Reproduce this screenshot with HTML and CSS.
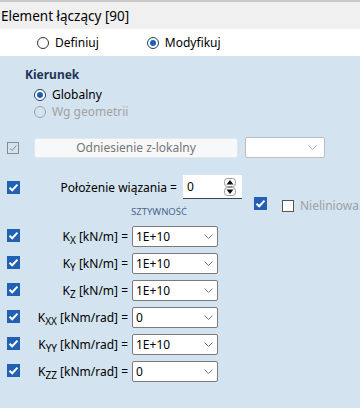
FILE: index.html
```html
<!DOCTYPE html>
<html lang="pl">
<head>
    <meta charset="UTF-8">
    <title>Element łączący</title>
    <link rel="stylesheet" href="styles.css">
</head>
<body>
    <div class="window">
        <div class="titlebar">
            <span class="title">Element łączący [90]</span>
        </div>

        <div class="modebar">
            <label class="radio"><span class="radio-dot"></span>Definiuj</label>
            <label class="radio"><span class="radio-dot checked"></span>Modyfikuj</label>
        </div>

        <div class="panel">
            <div class="group">
                <div class="group-title">Kierunek</div>
                <div class="radio-list">
                    <label class="radio"><span class="radio-dot checked"></span>Globalny</label>
                    <label class="radio disabled"><span class="radio-dot"></span>Wg geometrii</label>
                </div>
            </div>

            <div class="ref-row">
                <span class="check disabled">
                    <svg width="12" height="12" viewBox="0 0 12 12"><path d="M2.5 6.5 L5 9 L10 3" fill="none" stroke="#8a8a8a" stroke-width="1.2"/></svg>
                </span>
                <button class="ref-button">Odniesienie z-lokalny</button>
                <div class="combo empty">
                    <svg class="chevron" width="9" height="5" viewBox="0 0 9 5"><path d="M0.5 0.5 L4.5 4.5 L8.5 0.5" fill="none" stroke="#b0b0b0" stroke-width="1"/></svg>
                </div>
            </div>

            <div class="pos-row">
                <span class="check on">
                    <svg width="13" height="13" viewBox="0 0 13 13"><path d="M2.5 6.8 L5.2 9.3 L10.5 3.6" fill="none" stroke="#fff" stroke-width="2"/></svg>
                </span>
                <span class="pos-label">Położenie wiązania =</span>
                <div class="spin">
                    <span class="value">0</span>
                    <svg width="12" height="18" viewBox="0 0 12 18">
                        <rect x="0.5" y="0.5" width="11" height="8" rx="3" fill="#fff" stroke="#999"/>
                        <rect x="0.5" y="9.5" width="11" height="8" rx="3" fill="#fff" stroke="#999"/>
                        <path d="M6 2 L9.5 6.5 L2.5 6.5 Z" fill="#111"/>
                        <path d="M2.5 11.5 L9.5 11.5 L6 16 Z" fill="#111"/>
                    </svg>
                </div>
            </div>

            <div class="stiff-head">
                <span class="stiff-title">SZTYWNOŚĆ</span>
                <span class="check on">
                    <svg width="13" height="13" viewBox="0 0 13 13"><path d="M2.5 6.8 L5.2 9.3 L10.5 3.6" fill="none" stroke="#fff" stroke-width="2"/></svg>
                </span>
                <label class="nonlin"><span class="check off"></span>Nieliniowa c</label>
            </div>

            <div class="stiff-list">
                <div class="stiff-row">
                    <span class="check on"><svg width="13" height="13" viewBox="0 0 13 13"><path d="M2.5 6.8 L5.2 9.3 L10.5 3.6" fill="none" stroke="#fff" stroke-width="2"/></svg></span>
                    <span class="stiff-label">K<sub>X</sub> [kN/m] =</span>
                    <div class="combo"><span class="value">1E+10</span><svg class="chevron" width="9" height="5" viewBox="0 0 9 5"><path d="M0.5 0.5 L4.5 4.5 L8.5 0.5" fill="none" stroke="#777" stroke-width="1"/></svg></div>
                </div>
                <div class="stiff-row">
                    <span class="check on"><svg width="13" height="13" viewBox="0 0 13 13"><path d="M2.5 6.8 L5.2 9.3 L10.5 3.6" fill="none" stroke="#fff" stroke-width="2"/></svg></span>
                    <span class="stiff-label">K<sub>Y</sub> [kN/m] =</span>
                    <div class="combo"><span class="value">1E+10</span><svg class="chevron" width="9" height="5" viewBox="0 0 9 5"><path d="M0.5 0.5 L4.5 4.5 L8.5 0.5" fill="none" stroke="#777" stroke-width="1"/></svg></div>
                </div>
                <div class="stiff-row">
                    <span class="check on"><svg width="13" height="13" viewBox="0 0 13 13"><path d="M2.5 6.8 L5.2 9.3 L10.5 3.6" fill="none" stroke="#fff" stroke-width="2"/></svg></span>
                    <span class="stiff-label">K<sub>Z</sub> [kN/m] =</span>
                    <div class="combo"><span class="value">1E+10</span><svg class="chevron" width="9" height="5" viewBox="0 0 9 5"><path d="M0.5 0.5 L4.5 4.5 L8.5 0.5" fill="none" stroke="#777" stroke-width="1"/></svg></div>
                </div>
                <div class="stiff-row">
                    <span class="check on"><svg width="13" height="13" viewBox="0 0 13 13"><path d="M2.5 6.8 L5.2 9.3 L10.5 3.6" fill="none" stroke="#fff" stroke-width="2"/></svg></span>
                    <span class="stiff-label">K<sub>XX</sub> [kNm/rad] =</span>
                    <div class="combo"><span class="value">0</span><svg class="chevron" width="9" height="5" viewBox="0 0 9 5"><path d="M0.5 0.5 L4.5 4.5 L8.5 0.5" fill="none" stroke="#777" stroke-width="1"/></svg></div>
                </div>
                <div class="stiff-row">
                    <span class="check on"><svg width="13" height="13" viewBox="0 0 13 13"><path d="M2.5 6.8 L5.2 9.3 L10.5 3.6" fill="none" stroke="#fff" stroke-width="2"/></svg></span>
                    <span class="stiff-label">K<sub>YY</sub> [kNm/rad] =</span>
                    <div class="combo"><span class="value">1E+10</span><svg class="chevron" width="9" height="5" viewBox="0 0 9 5"><path d="M0.5 0.5 L4.5 4.5 L8.5 0.5" fill="none" stroke="#777" stroke-width="1"/></svg></div>
                </div>
                <div class="stiff-row">
                    <span class="check on"><svg width="13" height="13" viewBox="0 0 13 13"><path d="M2.5 6.8 L5.2 9.3 L10.5 3.6" fill="none" stroke="#fff" stroke-width="2"/></svg></span>
                    <span class="stiff-label">K<sub>ZZ</sub> [kNm/rad] =</span>
                    <div class="combo"><span class="value">0</span><svg class="chevron" width="9" height="5" viewBox="0 0 9 5"><path d="M0.5 0.5 L4.5 4.5 L8.5 0.5" fill="none" stroke="#777" stroke-width="1"/></svg></div>
                </div>
            </div>
        </div>
    </div>
</body>
</html>
```

FILE: styles.css
```css
* {
    margin: 0;
    padding: 0;
    box-sizing: border-box;
    font-family: 'Noto Sans', 'Open Sans', sans-serif;
}

body {
    width: 360px;
    height: 408px;
    overflow: hidden;
    background: #d3e3f0;
    color: #000;
    font-size: 12px;
}

.window {
    display: flex;
    flex-direction: column;
    min-height: 408px;
}

/* Pasek tytułu */
.titlebar {
    height: 29px;
    background: #f0f0f0;
    border-top: 2px solid #c9c9c9;
    display: flex;
    align-items: center;
    padding-left: 1px;
}

.title {
    font-size: 13.5px;
    white-space: nowrap;
}

.modebar {
    height: 27px;
    background: #fff;
    display: flex;
    align-items: center;
    padding-left: 37px;
    gap: 48px;
}

/* Radio */
.radio {
    display: flex;
    align-items: center;
    gap: 6px;
    white-space: nowrap;
}

.radio-dot {
    width: 12px;
    height: 12px;
    border: 1px solid #333;
    border-radius: 50%;
    background: #fff;
    position: relative;
}

.radio-dot.checked {
    border-color: #1d3d6b;
}

.radio-dot.checked::after {
    content: '';
    position: absolute;
    left: 2px;
    top: 2px;
    width: 6px;
    height: 6px;
    border-radius: 50%;
    background: #1d5fb4;
}

.radio.disabled {
    color: #a2a2a2;
}

.radio.disabled .radio-dot {
    border-color: #a2a2a2;
    background: transparent;
}

.panel {
    flex: 1;
    background: #d3e3f0;
}

.group {
    padding: 11px 0 0 25px;
}

.group-title {
    font-weight: bold;
    line-height: 16px;
    color: #1e3556;
}

.radio-list {
    margin-top: 3px;
    padding-left: 9px;
}

.radio-list .radio {
    height: 17px;
}

/* Checkbox */
.check {
    width: 13px;
    height: 13px;
    flex-shrink: 0;
    display: flex;
    align-items: center;
    justify-content: center;
}

.check.on {
    background: #2160b3;
}

.check.disabled {
    border: 1px solid #8a8a8a;
    width: 12px;
    height: 12px;
}

.check.off {
    width: 12px;
    height: 12px;
    border: 1px solid #555;
    background: #fff;
}

.ref-row {
    margin-top: 17px;
    height: 21px;
    display: flex;
    align-items: center;
    padding-left: 7px;
}

.ref-button {
    margin-left: 15px;
    width: 204px;
    height: 20px;
    background: #f7f8f9;
    border: 1px solid #e4e8ec;
    border-radius: 3px;
    color: #767676;
    font-size: 12px;
}

/* Combo */
.combo {
    width: 86px;
    height: 21px;
    background: #fff;
    border: 1px solid #7a7a7a;
    border-radius: 2px;
    display: flex;
    align-items: center;
    padding: 0 4px 0 3px;
}

.combo .value {
    flex: 1;
}

.combo.empty {
    width: 80px;
    margin-left: 7px;
    border-color: #bdbdbd;
    justify-content: flex-end;
    padding-right: 7px;
}

.pos-row {
    margin-top: 17px;
    height: 24px;
    width: 242px;
    padding-left: 7px;
    display: grid;
    grid-template-columns: 13px 1fr 59px;
    align-items: center;
}

.pos-label {
    text-align: right;
    padding-right: 6px;
    white-space: nowrap;
}

.spin {
    height: 24px;
    background: #fff;
    border-bottom: 1px solid #444;
    display: flex;
    align-items: center;
    padding: 0 6px 0 4px;
}

.spin .value {
    flex: 1;
}

.stiff-head {
    height: 21px;
    display: flex;
    align-items: flex-start;
    padding-left: 131px;
}

.stiff-title {
    width: 123px;
    flex-shrink: 0;
    font-size: 9.5px;
    color: #4a6688;
    margin-top: 6px;
}

.stiff-head .check.on {
    margin-top: -2px;
}

.nonlin {
    display: flex;
    align-items: center;
    gap: 6px;
    margin-top: -2px;
    margin-left: 15px;
    color: #a0a0a0;
    white-space: nowrap;
}

.stiff-list {
    margin-top: 6px;
    width: 218px;
    padding-left: 7px;
    display: flex;
    flex-direction: column;
    gap: 6px;
}

.stiff-row {
    display: grid;
    grid-template-columns: 13px 1fr 86px;
    align-items: start;
    height: 21px;
}

.stiff-row .check {
    margin-top: 3px;
}

.stiff-label {
    text-align: right;
    padding-right: 4px;
    line-height: 21px;
    white-space: nowrap;
}

.stiff-label sub {
    font-size: 10px;
    vertical-align: -3px;
    line-height: 0;
}
```
